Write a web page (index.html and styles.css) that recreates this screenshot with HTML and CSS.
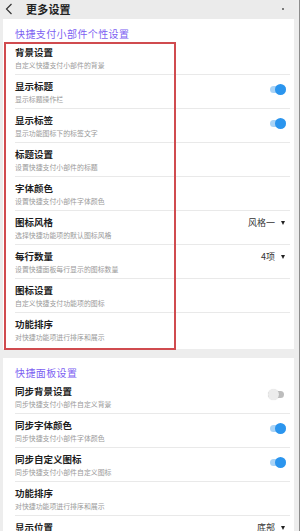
FILE: index.html
```html
<!DOCTYPE html>
<html lang="zh-CN">
<head>
<meta charset="utf-8">
<title>更多设置</title>
<link rel="stylesheet" href="styles.css">
</head>
<body>
<div class="page">
  <header class="topbar">
    <svg class="back" width="8" height="12" viewBox="0 0 8 12"><polyline points="6.5,1 1.5,6 6.5,11" fill="none" stroke="#333" stroke-width="1.2"/></svg>
    <span class="topbar-title">更多设置</span>
    <span class="dot"></span>
  </header>

  <section class="card card-first">
    <div class="card-title">快捷支付小部件个性设置</div>
    <div class="row"><div class="text"><div class="t">背景设置</div><div class="s">自定义快捷支付小部件的背景</div></div></div>
    <div class="row"><div class="text"><div class="t">显示标题</div><div class="s">显示标题操作栏</div></div><span class="toggle on"></span></div>
    <div class="row"><div class="text"><div class="t">显示标签</div><div class="s">显示功能图标下的标签文字</div></div><span class="toggle on"></span></div>
    <div class="row"><div class="text"><div class="t">标题设置</div><div class="s">设置快捷支付小部件的标题</div></div></div>
    <div class="row"><div class="text"><div class="t">字体颜色</div><div class="s">设置快捷支付小部件字体颜色</div></div></div>
    <div class="row"><div class="text"><div class="t">图标风格</div><div class="s">选择快捷功能项的默认图标风格</div></div><span class="value">风格一<i class="caret"></i></span></div>
    <div class="row"><div class="text"><div class="t">每行数量</div><div class="s">设置快捷面板每行显示的图标数量</div></div><span class="value">4项<i class="caret"></i></span></div>
    <div class="row"><div class="text"><div class="t">图标设置</div><div class="s">自定义快捷支付功能项的图标</div></div></div>
    <div class="row last"><div class="text"><div class="t">功能排序</div><div class="s">对快捷功能项进行排序和展示</div></div></div>
    <div class="highlight"></div>
  </section>

  <section class="card">
    <div class="card-title">快捷面板设置</div>
    <div class="row"><div class="text"><div class="t">同步背景设置</div><div class="s">同步快捷支付小部件自定义背景</div></div><span class="toggle"></span></div>
    <div class="row"><div class="text"><div class="t">同步字体颜色</div><div class="s">同步快捷支付小部件字体颜色</div></div><span class="toggle on"></span></div>
    <div class="row"><div class="text"><div class="t">同步自定义图标</div><div class="s">同步快捷支付小部件自定义图标</div></div><span class="toggle on"></span></div>
    <div class="row"><div class="text"><div class="t">功能排序</div><div class="s">对快捷功能项进行排序和展示</div></div></div>
    <div class="row"><div class="text"><div class="t">显示位置</div><div class="s">设置快捷面板的显示位置</div></div><span class="value">底部<i class="caret"></i></span></div>
  </section>
</div>
</body>
</html>
```

FILE: styles.css
```css
html, body {
  margin: 0;
  padding: 0;
}
body {
  font-family: "Noto Sans CJK SC", "Noto Sans", sans-serif;
  color: #222;
}
.page {
  width: 300px;
  height: 531px;
  box-sizing: border-box;
  background: #ededed;
  border-right: 1px solid #8c8c8c;
  overflow: hidden;
  padding-right: 2px;
}
.topbar {
  height: 19px;
  display: flex;
  align-items: center;
  background: #ebebeb;
  position: relative;
}
.back {
  margin-left: 5px;
  margin-top: -2px;
}
.topbar-title {
  margin-left: 13px;
  font-size: 11px;
  font-weight: 700;
  line-height: 14px;
  margin-top: -2px;
  letter-spacing: 0.2px;
}
.dot {
  position: absolute;
  left: 282px;
  top: 8px;
  width: 2px;
  height: 2px;
  border-radius: 50%;
  background: #555;
}
.card {
  position: relative;
  background: #fff;
  margin: 0 3px 0 3px;
  padding: 8px 4px 3px 12px;
}
.card-first {
  margin-bottom: 9px;
}
.card-title {
  font-size: 10px;
  line-height: 14px;
  color: #7c5ff2;
  letter-spacing: 0.4px;
}
.row {
  display: flex;
  align-items: center;
  padding: 5px 0 4px;
  border-bottom: 1px solid #e9e9e9;
}
.row.last {
  border-bottom: none;
}
.text {
  flex: 1;
}
.t {
  font-size: 9.5px;
  line-height: 13px;
  font-weight: 700;
  color: #1e1e1e;
}
.s {
  margin-top: 2px;
  font-size: 6.9px;
  line-height: 9px;
  color: #9a9a9a;
}
.toggle {
  position: relative;
  width: 18px;
  height: 11px;
  margin-right: 4px;
  margin-top: -6px;
}
.toggle::before {
  content: "";
  position: absolute;
  left: 0;
  top: 2px;
  width: 16px;
  height: 7px;
  border-radius: 4px;
  background: #bdbdbd;
}
.toggle::after {
  content: "";
  position: absolute;
  left: 0;
  top: 0;
  width: 11px;
  height: 11px;
  border-radius: 50%;
  background: #ececec;
  box-shadow: 0 0 1px rgba(0,0,0,0.15);
}
.toggle.on::before {
  left: 2px;
  background: #a9d3f6;
}
.toggle.on::after {
  left: 7px;
  background: #2b95ee;
  box-shadow: none;
}
.value {
  display: flex;
  align-items: center;
  font-size: 9px;
  line-height: 12px;
  color: #333;
  margin-right: 5px;
  margin-top: -10px;
}
.caret {
  display: block;
  width: 0;
  height: 0;
  margin-left: 6px;
  border-left: 2.5px solid transparent;
  border-right: 2.5px solid transparent;
  border-top: 4px solid #222;
}
.highlight {
  position: absolute;
  left: 1px;
  top: 23px;
  width: 168px;
  height: 304px;
  border: 2px solid #d04b4f;
  pointer-events: none;
}
```
